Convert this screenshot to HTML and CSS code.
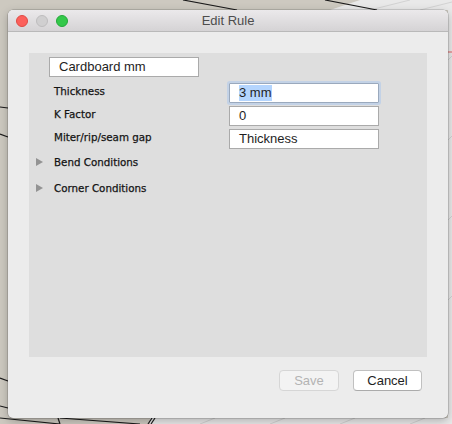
FILE: index.html
```html
<!DOCTYPE html>
<html>
<head>
<meta charset="utf-8">
<link rel="stylesheet" href="styles.css">
</head>
<body>
<svg class="desk" width="452" height="424" viewBox="0 0 452 424">
  <rect width="452" height="424" fill="#cdc9c0"/>
  <polygon points="360,0 452,0 452,424 150,424 150,418 448,418 448,10 330,10" fill="#e9e9e9"/>
  <g stroke="#d2d2d2" stroke-width="1" fill="none">
    <line x1="370" y1="10" x2="410" y2="0"/>
    <line x1="420" y1="10" x2="452" y2="2"/>
    <line x1="448" y1="60" x2="452" y2="56"/>
    <line x1="448" y1="140" x2="452" y2="136"/>
    <line x1="448" y1="220" x2="452" y2="216"/>
    <line x1="448" y1="300" x2="452" y2="296"/>
    <line x1="200" y1="424" x2="215" y2="418"/>
    <line x1="270" y1="424" x2="285" y2="418"/>
    <line x1="340" y1="424" x2="355" y2="418"/>
    <line x1="410" y1="424" x2="425" y2="418"/>
  </g>
  <g stroke="#1a1a1a" stroke-width="1.2" fill="none">
    <line x1="183" y1="0" x2="237" y2="10"/>
    <line x1="325" y1="0" x2="377" y2="10"/>
    <line x1="0" y1="107" x2="8" y2="108"/>
    <line x1="0" y1="134" x2="8" y2="137"/>
    <line x1="0" y1="378" x2="8" y2="381"/>
    <line x1="0" y1="406" x2="8" y2="408"/>
    <line x1="0" y1="418" x2="60" y2="424"/>
    <line x1="60" y1="418" x2="140" y2="424"/>
    <line x1="58" y1="418" x2="60" y2="424"/>
    <line x1="152" y1="418" x2="148" y2="424"/>
    <line x1="155" y1="418" x2="151" y2="424"/>
  </g>
  <line x1="448" y1="52" x2="452" y2="52" stroke="#e06060" stroke-width="1"/>
</svg>

<div class="window">
  <div class="titlebar">
    <div class="lights">
      <span class="light red"></span>
      <span class="light gray"></span>
      <span class="light green"></span>
    </div>
    <div class="title">Edit Rule</div>
  </div>
  <div class="content">
    <div class="panel">
      <div class="namefield field">Cardboard mm</div>
      <div class="form">
        <div class="label">Thickness</div>
        <div class="field focus"><span class="sel">3 mm</span></div>
        <div class="label">K Factor</div>
        <div class="field">0</div>
        <div class="label">Miter/rip/seam gap</div>
        <div class="field">Thickness</div>
      </div>
      <div class="disclosure"><span class="tri"></span><span class="dlabel">Bend Conditions</span></div>
      <div class="disclosure"><span class="tri"></span><span class="dlabel">Corner Conditions</span></div>
    </div>
    <div class="buttons">
      <div class="btn save">Save</div>
      <div class="btn cancel">Cancel</div>
    </div>
  </div>
</div>
</body>
</html>
```
FILE: styles.css
```css
html, body {
  margin: 0;
  padding: 0;
}
body {
  width: 452px;
  height: 424px;
  overflow: hidden;
  position: relative;
  background: #cdc9c0;
  font-family: "Liberation Sans", Arial, sans-serif;
}
.desk {
  position: absolute;
  left: 0;
  top: 0;
  z-index: 0;
}
.window {
  position: relative;
  z-index: 1;
  margin: 10px 0 0 8px;
  width: 440px;
  height: 408px;
  background: #ececec;
  border-radius: 5px;
  box-shadow: 0 0 0 0.5px rgba(0,0,0,0.25), 0 3px 10px rgba(0,0,0,0.25);
  overflow: hidden;
  display: flex;
  flex-direction: column;
}
.titlebar {
  height: 21px;
  border-bottom: 1px solid #b9b9b9;
  background: linear-gradient(#ebe9eb, #d5d3d5);
  position: relative;
  display: flex;
  align-items: center;
  justify-content: center;
  flex: none;
}
.lights {
  position: absolute;
  left: 8px;
  top: 5px;
  display: flex;
  gap: 8px;
}
.light {
  width: 12px;
  height: 12px;
  border-radius: 50%;
  box-sizing: border-box;
}
.red { background: #fc605b; border: 0.5px solid #de4a44; }
.gray { background: #d0cfd0; border: 0.5px solid #bdbcbd; }
.green { background: #34c84a; border: 0.5px solid #24a83a; }
.title {
  font-size: 13px;
  color: #4d4d4d;
  line-height: 21px;
}
.content {
  padding: 21px 21px 0 21px;
  flex: 1;
  display: flex;
  flex-direction: column;
}
.panel {
  height: 304px;
  background: #dedede;
  padding-top: 4px;
  box-sizing: border-box;
}
.field {
  width: 150px;
  height: 20px;
  box-sizing: border-box;
  border: 1px solid #aaaaaa;
  background: #fff;
  font-size: 13px;
  line-height: 18px;
  color: #1e1e1e;
  padding-left: 9px;
  white-space: nowrap;
}
.namefield {
  margin-left: 20px;
}
.form {
  margin-top: 6px;
  display: grid;
  grid-template-columns: 200px 150px;
  row-gap: 3px;
}
.label, .dlabel {
  font-family: "DejaVu Sans", Verdana, sans-serif;
  font-size: 10.3px;
  color: #141414;
  -webkit-text-stroke: 0.25px #141414;
  white-space: nowrap;
}
.label {
  padding-left: 25px;
  line-height: 17px;
}
.focus {
  border-color: #9aa9bd;
  box-shadow: 0 0 0 2px #c3d2e6;
  border-radius: 1px;
}
.sel {
  background: #b4d5fe;
  display: inline-block;
  line-height: 16px;
  margin-top: 1px;
  vertical-align: top;
}
.disclosure {
  height: 26px;
  display: flex;
  align-items: center;
  padding-left: 7px;
}
.dlabel {
  line-height: 26px;
}
.tri {
  width: 0;
  height: 0;
  border-top: 4px solid transparent;
  border-bottom: 4px solid transparent;
  border-left: 7px solid #939393;
  margin-right: 11px;
  margin-top: -1px;
}
.buttons {
  margin-top: 13px;
  display: flex;
  justify-content: flex-end;
  gap: 14px;
  padding-right: 5px;
}
.btn {
  height: 21px;
  box-sizing: border-box;
  border-radius: 4px;
  font-size: 13px;
  line-height: 19px;
  text-align: center;
}
.save {
  width: 60px;
  background: #f3f3f3;
  border: 1px solid #d6d6d6;
  color: #b3b3b3;
}
.cancel {
  width: 69px;
  background: #ffffff;
  border: 1px solid #c0c0c0;
  border-bottom-color: #ababab;
  color: #1e1e1e;
}
```
